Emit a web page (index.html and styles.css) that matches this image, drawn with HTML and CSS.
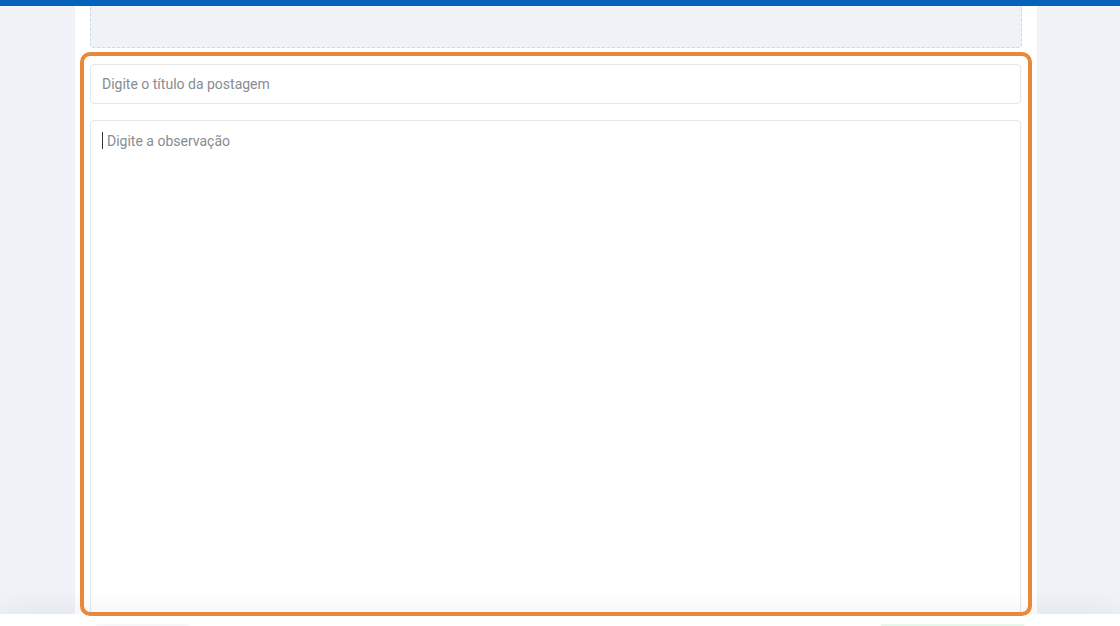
FILE: index.html
```html
<!DOCTYPE html>
<html lang="pt-BR">
<head>
<meta charset="utf-8">
<title>Nova postagem</title>
<link rel="stylesheet" href="styles.css">
</head>
<body>
<div class="topbar"></div>
<main class="page">
  <section class="card">
    <div class="dropzone"></div>
    <form class="post-form">
      <div class="highlight"></div>
      <input class="field title-field" type="text" placeholder="Digite o título da postagem">
      <div class="field note-field"><span class="caret"></span><span class="placeholder">Digite a observação</span></div>
    </form>
  </section>
</main>
<footer class="footer">
  <div class="footer-inner">
    <span class="btn-ghost"></span>
    <span class="btn-save"></span>
  </div>
</footer>
</body>
</html>
```

FILE: styles.css
```css
* { box-sizing: border-box; }
html, body { margin: 0; height: 626px; overflow: hidden; }
body {
  background: #eff2f7;
  font-family: "Roboto", "Liberation Sans", sans-serif;
}
.topbar { height: 6px; background: #0462ba; }
.page { display: flex; padding-left: 75px; }
.card {
  width: 962px;
  height: 620px;
  background: #ffffff;
  padding: 0 15px;
  display: flex;
  flex-direction: column;
}
.dropzone {
  height: 42px;
  background: #eff2f7;
  border: 1px dashed #d3d8e0;
  border-top: none;
  border-radius: 0 0 4px 4px;
}
.post-form {
  position: relative;
  margin-top: 16px;
  display: flex;
  flex-direction: column;
  gap: 16px;
  flex: 1;
}
.highlight {
  position: absolute;
  left: -10px; right: -10px; top: -12px;
  height: 564px;
  border: 4px solid #e8883a;
  border-radius: 10px;
  z-index: 20;
  pointer-events: none;
}
.field {
  width: 931px;
  border: 1px solid #e3e6ea;
  border-radius: 4px;
  background: #fff;
  font-family: inherit;
  font-size: 14px;
  color: #495057;
}
.title-field {
  height: 40px;
  padding: 0 11px;
  outline: none;
}
.title-field::placeholder { color: #878c93; }
.note-field {
  flex: 1;
  padding: 11px 11px;
  display: flex;
  align-items: flex-start;
  line-height: 18px;
}
.caret {
  width: 1px; height: 17px;
  background: #333;
  margin-right: 4px;
}
.placeholder { color: #878c93; }
.footer {
  position: fixed;
  left: 0; right: 0; bottom: 0;
  height: 12px;
  background: #fff;
  box-shadow: 0 -6px 22px rgba(0,0,0,0.07);
  z-index: 10;
}
.footer-inner {
  display: flex;
  justify-content: space-between;
  padding: 10px 95px 0 95px;
}
.btn-ghost { width: 95px; height: 20px; background: #f6f7f9; border-radius: 4px; }
.btn-save { width: 145px; height: 20px; background: #e4f8ec; border-radius: 4px; }
```
